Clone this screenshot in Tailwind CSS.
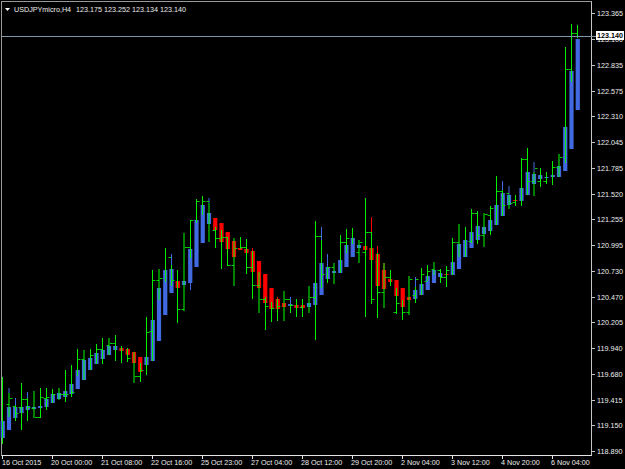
<!DOCTYPE html>
<html>
<head>
<meta charset="utf-8">
<script src="https://cdn.jsdelivr.net/npm/@tailwindcss/browser@4"></script>
</head>
<body class="bg-black">
<div class="w-[625px] h-[469px] overflow-hidden bg-black pl-px pt-px text-[7.2px] leading-none text-[#eeeeee] font-['Liberation_Sans',Arial,sans-serif]">
  <div class="flex h-[455px]">
    <div class="relative w-[591px] h-[455px] border-l border-t border-r border-b border-l-[#9a9a9a] border-t-[#9a9a9a] border-r-[#c4c4c4] border-b-[#e4e4e4]">
      <svg id="chart" class="absolute left-[-2px] top-[-2px] w-[592px] h-[455px]" viewBox="0 0 592 455" xmlns="http://www.w3.org/2000/svg"></svg>
      <div class="absolute left-[3px] top-[4px] flex items-center">
        <svg class="w-[5px] h-[3px] mr-[4px]" viewBox="0 0 5 3"><path d="M0 0H5L2.5 3Z" fill="#fff"/></svg>
        <span class="w-[62px] whitespace-nowrap">USDJPYmicro,H4</span>
        <span class="whitespace-nowrap">123.175 123.252 123.134 123.140</span>
      </div>
      <div class="absolute left-0 top-[34px] w-[594px] h-px bg-[#7f95a8]"></div>
    </div>
    <div class="relative flex-1 flex flex-col">
      <div class="h-[25.76px] shrink-0 flex items-center"><span class="w-[3px] h-px bg-[#c4c4c4] mr-[2px]"></span>123.365</div>
      <div class="h-[25.76px] shrink-0 flex items-center"><span class="w-[3px] h-px bg-[#c4c4c4] mr-[2px]"></span>123.100</div>
      <div class="h-[25.76px] shrink-0 flex items-center"><span class="w-[3px] h-px bg-[#c4c4c4] mr-[2px]"></span>122.835</div>
      <div class="h-[25.76px] shrink-0 flex items-center"><span class="w-[3px] h-px bg-[#c4c4c4] mr-[2px]"></span>122.575</div>
      <div class="h-[25.76px] shrink-0 flex items-center"><span class="w-[3px] h-px bg-[#c4c4c4] mr-[2px]"></span>122.310</div>
      <div class="h-[25.76px] shrink-0 flex items-center"><span class="w-[3px] h-px bg-[#c4c4c4] mr-[2px]"></span>122.045</div>
      <div class="h-[25.76px] shrink-0 flex items-center"><span class="w-[3px] h-px bg-[#c4c4c4] mr-[2px]"></span>121.785</div>
      <div class="h-[25.76px] shrink-0 flex items-center"><span class="w-[3px] h-px bg-[#c4c4c4] mr-[2px]"></span>121.520</div>
      <div class="h-[25.76px] shrink-0 flex items-center"><span class="w-[3px] h-px bg-[#c4c4c4] mr-[2px]"></span>121.255</div>
      <div class="h-[25.76px] shrink-0 flex items-center"><span class="w-[3px] h-px bg-[#c4c4c4] mr-[2px]"></span>120.995</div>
      <div class="h-[25.76px] shrink-0 flex items-center"><span class="w-[3px] h-px bg-[#c4c4c4] mr-[2px]"></span>120.730</div>
      <div class="h-[25.76px] shrink-0 flex items-center"><span class="w-[3px] h-px bg-[#c4c4c4] mr-[2px]"></span>120.470</div>
      <div class="h-[25.76px] shrink-0 flex items-center"><span class="w-[3px] h-px bg-[#c4c4c4] mr-[2px]"></span>120.205</div>
      <div class="h-[25.76px] shrink-0 flex items-center"><span class="w-[3px] h-px bg-[#c4c4c4] mr-[2px]"></span>119.940</div>
      <div class="h-[25.76px] shrink-0 flex items-center"><span class="w-[3px] h-px bg-[#c4c4c4] mr-[2px]"></span>119.680</div>
      <div class="h-[25.76px] shrink-0 flex items-center"><span class="w-[3px] h-px bg-[#c4c4c4] mr-[2px]"></span>119.415</div>
      <div class="h-[25.76px] shrink-0 flex items-center"><span class="w-[3px] h-px bg-[#c4c4c4] mr-[2px]"></span>119.150</div>
      <div class="h-[25.76px] shrink-0 flex items-center"><span class="w-[3px] h-px bg-[#c4c4c4] mr-[2px]"></span>118.890</div>
      <div class="absolute left-[4px] top-[30px] w-[28px] h-[9px] bg-white text-black font-bold flex items-center pl-[1px]">123.140</div>
    </div>
  </div>
  <div class="flex pl-px">
    <div class="w-[50px] shrink-0"><div class="w-px h-[3px] bg-[#e4e4e4]"></div><div class="whitespace-nowrap">16 Oct 2015</div></div>
    <div class="w-[50px] shrink-0"><div class="w-px h-[3px] bg-[#e4e4e4]"></div><div class="-ml-[1px] whitespace-nowrap">20 Oct 00:00</div></div>
    <div class="w-[50px] shrink-0"><div class="w-px h-[3px] bg-[#e4e4e4]"></div><div class="-ml-[1px] whitespace-nowrap">21 Oct 08:00</div></div>
    <div class="w-[50px] shrink-0"><div class="w-px h-[3px] bg-[#e4e4e4]"></div><div class="-ml-[1px] whitespace-nowrap">22 Oct 16:00</div></div>
    <div class="w-[50px] shrink-0"><div class="w-px h-[3px] bg-[#e4e4e4]"></div><div class="-ml-[1px] whitespace-nowrap">25 Oct 23:00</div></div>
    <div class="w-[50px] shrink-0"><div class="w-px h-[3px] bg-[#e4e4e4]"></div><div class="-ml-[1px] whitespace-nowrap">27 Oct 04:00</div></div>
    <div class="w-[50px] shrink-0"><div class="w-px h-[3px] bg-[#e4e4e4]"></div><div class="-ml-[1px] whitespace-nowrap">28 Oct 12:00</div></div>
    <div class="w-[50px] shrink-0"><div class="w-px h-[3px] bg-[#e4e4e4]"></div><div class="-ml-[1px] whitespace-nowrap">29 Oct 20:00</div></div>
    <div class="w-[50px] shrink-0"><div class="w-px h-[3px] bg-[#e4e4e4]"></div><div class="-ml-[1px] whitespace-nowrap">2 Nov 04:00</div></div>
    <div class="w-[50px] shrink-0"><div class="w-px h-[3px] bg-[#e4e4e4]"></div><div class="-ml-[1px] whitespace-nowrap">3 Nov 12:00</div></div>
    <div class="w-[50px] shrink-0"><div class="w-px h-[3px] bg-[#e4e4e4]"></div><div class="-ml-[1px] whitespace-nowrap">4 Nov 20:00</div></div>
    <div class="w-[50px] shrink-0"><div class="w-px h-[3px] bg-[#e4e4e4]"></div><div class="-ml-[1px] whitespace-nowrap">6 Nov 04:00</div></div>
  </div>
</div>
<script>
const D=[[377,444,421,438,'b'],[393,417,407,430,'b',404,398,388,393],[405,421,407,418,'b',406,413,398,405],[383,430,407,413,'b',407,399],[398,421,406,410,'b',399,407,392,398],[391,418,407,409,'b',408,417],[388,418,406,408,'b',417,397],[388,410,399,407,'b',398,397],[389,403,394,403,'b',0,394],[388,400,393,399,'b',0,394],[370,402,391,397,'b',394,394],[365,397,384,394,'b',0,392],[349,376,370,389,'b',0,359],[350,380,360,380,'b',359,0],[349,370,358,370,'b',0,355],[344,364,353,364,'b',0,349],[338,364,350,359,'b',349,0],[338,355,346,355,'b',345,343],[335,361,346,350,'b',343,0],[346,363,348,351,'r'],[348,362,349,355,'r',0,358],[352,383,352,363,'r',0,376],[363,382,357,372,'r',376,370],[317,375,357,365,'b',0,332],[270,361,320,361,'b',331,280],[269,300,288,341,'b',280,278],[248,282,270,315,'b'],[265,286,269,293,'b',257,280,254,265],[270,323,281,288,'r',0,309],[233,311,281,285,'b',309,247],[220,258,249,283,'b',247,220,258,290],[199,223,220,267,'b',0,201],[196,215,205,243,'b',0,201],[203,242,213,224,'b',201,0,198,203],[227,248,218,230,'r',230,238],[230,269,223,242,'r',238,237],[237,266,232,249,'r',237,265],[238,286,241,257,'r',265,248],[237,249,248,250,'r',0,247],[239,274,249,253,'r',247,267],[251,299,251,272,'r',267,285,248,251],[272,313,261,288,'r',285,299],[297,330,274,303,'r',299,306],[302,322,288,309,'r',0,308],[299,321,299,309,'r',0,306,297,299],[291,321,303,307,'r',0,299],[304,313,304,306,'b',299,305,297,304],[299,317,305,308,'r'],[299,317,305,308,'r',307,0],[286,313,303,307,'b',0,297],[221,340,283,305,'b',297,236],[240,288,263,295,'b',236,274,227,240],[267,283,267,279,'b',0,267,254,267],[263,284,271,273,'b',267,0],[235,273,260,273,'b',0,242],[229,253,245,267,'b',242,238],[228,244,238,257,'b'],[240,263,245,248,'b',252,242],[198,317,246,250,'r',252,232],[232,304,248,260,'r',232,299,217,232],[253,318,254,286,'r',0,292,246,253],[263,308,270,289,'r',292,277,263,270],[270,286,279,282,'r',277,0],[288,314,280,296,'r',312,303],[300,320,288,307,'r',0,312],[276,315,297,300,'r',312,279],[287,303,290,299,'b',295,279,277,287],[268,295,284,295,'b',0,274],[265,281,276,290,'b',281,271],[262,275,270,283,'b',269,0],[269,283,273,277,'b',270,277],[266,287,274,275,'r',277,270],[238,275,262,275,'b',0,242],[224,257,244,269,'b',242,0],[227,257,240,257,'b'],[209,243,232,248,'b',241,213],[211,244,226,240,'b',213,235],[213,247,227,234,'b',235,214],[206,235,220,231,'b',215,208],[176,225,205,225,'b',0,191],[190,216,193,216,'b',191,205,181,190],[195,209,195,205,'b',193,203,186,195],[195,206,200,201,'r',202,0],[158,206,188,201,'b',0,159],[148,195,172,195,'b',159,181],[172,196,174,184,'b',181,168,162,172],[168,187,175,179,'b',181,0],[172,184,177,178,'b',181,0],[161,185,175,177,'b',0,167],[154,177,166,177,'b',167,157],[47,163,127,171,'b',0,69],[24,82,71,149,'b',69,33],[25,38,39,110,'b',33,0]];
const G='#00f000',C={b:'#4169e1',r:'#ff0000'};
let back='',front='';
const R=(x,y,w,h,f,o)=>`<rect x="${x}" y="${y}" width="${w}" height="${h}" fill="${f}"${o?` opacity="${o}"`:''}/>`;
D.forEach((d,k)=>{
  const [h,l,t,b,c,L,Rt,wt,wb]=d, x=2.75+6.25*k, dim=k%4===1;
  if(wt) back+=dim?R(x-1,wt,2,wb-wt,C[c],.5):R(Math.floor(x),wt,1,wb-wt,C[c]);
  back+=R(x-2.1,t,4.2,b-t,C[c]);
  const px=dim?x-1:Math.floor(x);
  front+=dim?R(px,h,2,l-h,'#00ff00',.5):R(px,h,1,l-h,G);
  if(L) front+=R(Math.floor(x)-2.5,L,2.5,1,G,.85);
  if(Rt) front+=R(Math.floor(x)+1,Rt,2.5,1,G,.85);
});
document.getElementById('chart').innerHTML=back+front;
</script>
</body>
</html>
